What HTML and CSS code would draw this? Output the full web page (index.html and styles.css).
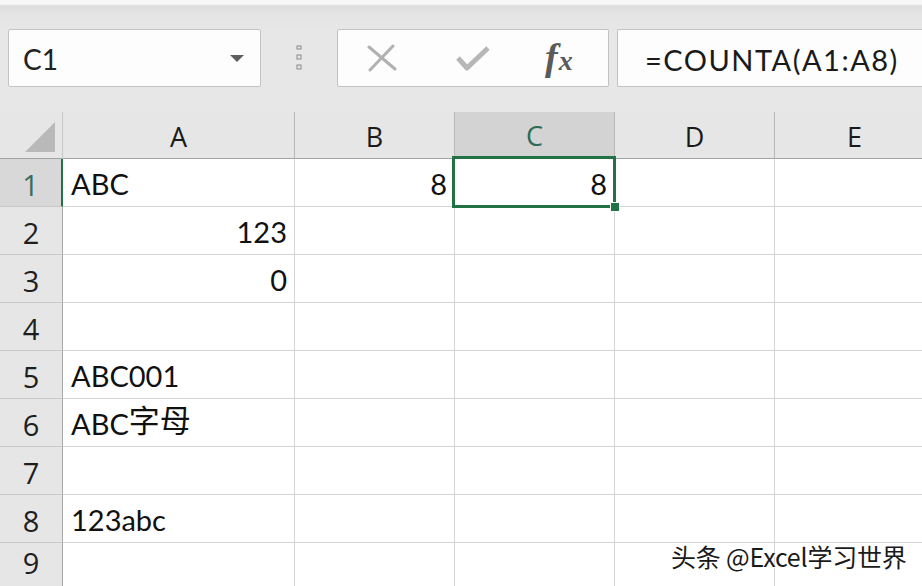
FILE: index.html
```html
<!DOCTYPE html>
<html>
<head>
<meta charset="utf-8">
<link rel="stylesheet" href="styles.css">
</head>
<body>
<div class="app">
  <div class="toolbar">
    <div class="namebox">
      <span class="name">C1</span>
      <svg class="dropdown" width="14" height="8" viewBox="0 0 14 8"><path d="M0 0 H14 L7 7 Z" fill="#5f5f5f"/></svg>
    </div>
    <div class="grip">
      <svg width="6" height="26" viewBox="0 0 6 26"><g fill="none" stroke="#8a8a8a" stroke-width="1"><rect x="1" y="1" width="4" height="3"/><rect x="1" y="10" width="4" height="4"/><rect x="1" y="20" width="4" height="4"/></g></svg>
    </div>
    <div class="buttons">
      <svg class="ico" width="32" height="28" viewBox="0 0 32 28"><path d="M3 3 L29 25 M27 2 L4 26" stroke="#b1b1b1" stroke-width="3" fill="none" stroke-linecap="round"/></svg>
      <svg class="ico" width="36" height="28" viewBox="0 0 36 28"><path d="M3 14 L12 24 L33 4" stroke="#b7b7b7" stroke-width="5" fill="none" stroke-linejoin="round"/></svg>
      <span class="fx">f<span class="x">x</span></span>
    </div>
    <div class="formula">=COUNTA(A1:A8)</div>
  </div>
  <div class="sheet">
    <div class="corner"><svg width="32" height="32" viewBox="0 0 32 32"><path d="M31 1 V31 H1 Z" fill="#b9b9b9"/></svg></div>
    <div class="colh">A</div>
    <div class="colh">B</div>
    <div class="colh sel">C</div>
    <div class="colh">D</div>
    <div class="colh">E</div>

    <div class="rowh sel">1</div>
    <div class="cell">ABC</div>
    <div class="cell num">8</div>
    <div class="cell num active">8<span class="handle"></span></div>
    <div class="cell"></div>
    <div class="cell"></div>

    <div class="rowh">2</div>
    <div class="cell num">123</div>
    <div class="cell"></div><div class="cell"></div><div class="cell"></div><div class="cell"></div>

    <div class="rowh">3</div>
    <div class="cell num">0</div>
    <div class="cell"></div><div class="cell"></div><div class="cell"></div><div class="cell"></div>

    <div class="rowh">4</div>
    <div class="cell"></div>
    <div class="cell"></div><div class="cell"></div><div class="cell"></div><div class="cell"></div>

    <div class="rowh">5</div>
    <div class="cell">ABC001</div>
    <div class="cell"></div><div class="cell"></div><div class="cell"></div><div class="cell"></div>

    <div class="rowh">6</div>
    <div class="cell">ABC<span class="cjk">字母</span></div>
    <div class="cell"></div><div class="cell"></div><div class="cell"></div><div class="cell"></div>

    <div class="rowh">7</div>
    <div class="cell"></div>
    <div class="cell"></div><div class="cell"></div><div class="cell"></div><div class="cell"></div>

    <div class="rowh">8</div>
    <div class="cell">123abc</div>
    <div class="cell"></div><div class="cell"></div><div class="cell"></div><div class="cell"></div>

    <div class="rowh last">9</div>
    <div class="cell"></div>
    <div class="cell"></div><div class="cell"></div><div class="cell"></div><div class="cell"></div>
  </div>
  <div class="watermark">头条 @Excel学习世界</div>
</div>
</body>
</html>
```
FILE: styles.css
```css
html, body {
  margin: 0;
  padding: 0;
  width: 922px;
  height: 586px;
  overflow: hidden;
  background: #ffffff;
}
.app {
  position: relative;
  width: 922px;
  height: 586px;
  overflow: hidden;
  font-family: Lato, "Open Sans", "Noto Sans CJK SC", sans-serif;
  color: #111;
}
.toolbar {
  height: 112px;
  box-sizing: border-box;
  background: linear-gradient(#f7f7f7 0px, #f7f7f7 4px, #dcdcdc 6px, #e4e4e4 14px, #e7e7e7 30px, #e7e7e7 100%);
  display: flex;
  align-items: flex-start;
  padding-top: 29px;
  padding-left: 8px;
}
.namebox {
  width: 253px;
  height: 58px;
  box-sizing: border-box;
  background: #fdfdfd;
  border: 1px solid #c3c3c3;
  border-radius: 2px;
  display: flex;
  align-items: center;
  justify-content: space-between;
  padding: 0 16px 0 14px;
}
.name {
  font-size: 28px;
  color: #222;
  padding-top: 2px;
}
.dropdown { margin-top: 2px; }
.grip {
  width: 76px;
  height: 58px;
  display: flex;
  align-items: center;
  padding-left: 35px;
  box-sizing: border-box;
}
.buttons {
  width: 272px;
  height: 58px;
  box-sizing: border-box;
  background: #fdfdfd;
  border: 1px solid #c3c3c3;
  border-radius: 2px;
  display: flex;
  align-items: center;
  padding-left: 28px;
}
.buttons .ico:nth-child(1) { margin-right: 57px; }
.buttons .ico:nth-child(2) { margin-right: 54px; }
.fx {
  font-family: "Liberation Serif", "DejaVu Serif", serif;
  font-style: italic;
  font-weight: bold;
  font-size: 38px;
  color: #5a5a5a;
  line-height: 1;
  margin-top: -2px;
}
.fx .x { font-size: 28px; margin-left: 1px; }
.formula {
  margin-left: 8px;
  flex: 1;
  height: 58px;
  box-sizing: border-box;
  background: #fdfdfd;
  border: 1px solid #c3c3c3;
  border-right: none;
  border-radius: 2px 0 0 2px;
  font-size: 29px;
  color: #1a1a1a;
  display: flex;
  align-items: center;
  padding-left: 27px;
  padding-top: 2px;
  letter-spacing: 1.5px;
}
.sheet {
  display: grid;
  grid-template-columns: 63px 232px 160px 160px 160px 160px;
  grid-template-rows: 47px repeat(9, 48px);
  font-family: Lato, "Noto Sans CJK SC", sans-serif;
}
.corner {
  background: #e6e6e6;
  border-right: 1px solid #c9c9c9;
  border-bottom: 1px solid #a3a3a3;
  display: flex;
  align-items: flex-end;
  justify-content: flex-end;
  padding: 0 6px 5px 0;
}
.colh {
  background: #e6e6e6;
  border-right: 1px solid #b8b8b8;
  border-bottom: 1px solid #a3a3a3;
  display: flex;
  align-items: center;
  justify-content: center;
  font-family: "Open Sans", Lato, sans-serif;
  font-size: 27px;
  color: #1a1a1a;
  padding-top: 2px;
  box-sizing: border-box;
}
.colh.sel {
  background: #d3d3d3;
  color: #2d6b55;
  border-bottom: 2px solid #217346;
}
.rowh {
  background: #e6e6e6;
  border-right: 1px solid #a8a8a8;
  border-bottom: 1px solid #c8c8c8;
  display: flex;
  align-items: center;
  justify-content: center;
  font-family: "Open Sans", Lato, sans-serif;
  font-size: 29px;
  color: #1e1e1e;
  padding-top: 4px;
  box-sizing: border-box;
}
.rowh.last { align-items: flex-start; padding-top: 0; line-height: 40px; }
.rowh.sel {
  background: #d8d8d8;
  color: #3a6d5a;
  border-right: 2px solid #217346;
}
.cell {
  border-right: 1px solid #d4d4d4;
  border-bottom: 1px solid #d4d4d4;
  font-size: 29px;
  color: #111;
  display: flex;
  align-items: flex-end;
  padding: 0 7px 5px 8px;
  box-sizing: border-box;
  white-space: nowrap;
}
.cjk { font-size: 31px; }
.cell.num { justify-content: flex-end; }
.cell.active { position: relative; }
.cell.active::after {
  content: "";
  position: absolute;
  left: -3px;
  top: -3px;
  right: -2px;
  bottom: -2px;
  border: 3px solid #217346;
  pointer-events: none;
}
.handle {
  position: absolute;
  right: -6px;
  bottom: -6px;
  width: 8px;
  height: 8px;
  background: #217346;
  border: 1px solid #fff;
  z-index: 2;
}
.watermark {
  position: absolute;
  left: 671px;
  top: 538px;
  font-family: "Noto Sans CJK SC", sans-serif;
  font-size: 25px;
  color: #1a1a1a;
  text-shadow: 1px 1px 0 #fff, -1px 0 0 #fff;
  letter-spacing: -0.2px;
  white-space: nowrap;
}
```
